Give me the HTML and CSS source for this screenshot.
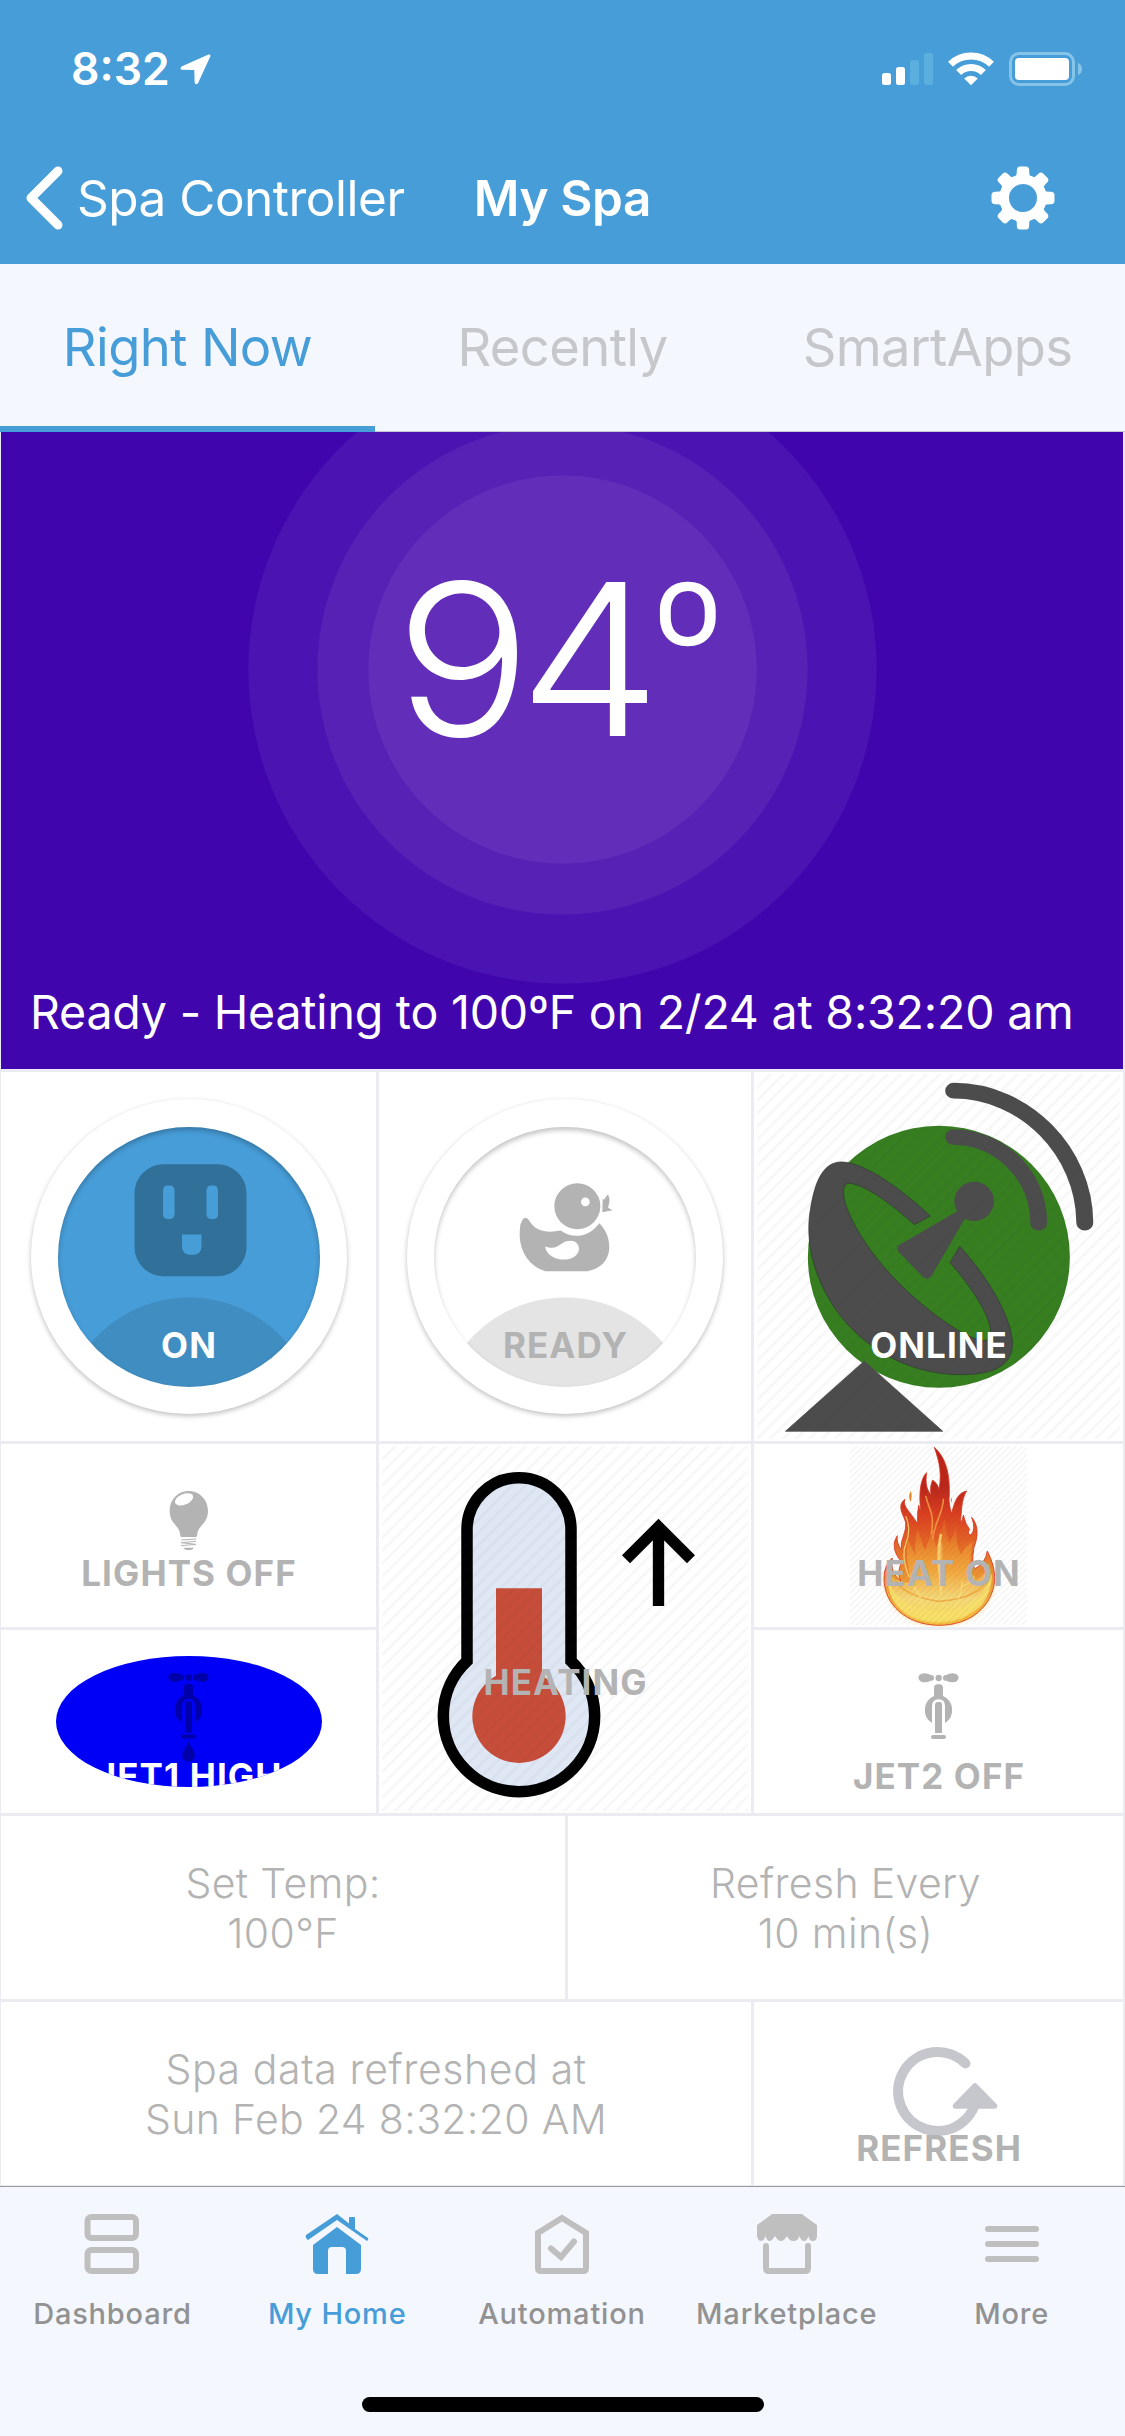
FILE: index.html
```html
<!DOCTYPE html>
<html lang="en">
<head>
<meta charset="utf-8">
<title>My Spa</title>
<link rel="stylesheet" href="styles.css">
</head>
<body>
<header class="header">
  <div class="status-bar">
    <div class="clock">
      <span class="time">8:32</span>
      <svg width="31" height="31" viewBox="0 0 31 31"><path d="M28.500 .6 1.500 12.500Q-.8 15.300 2 15.700L14.300 16 14.600 28.500Q15.500 31.500 18 29.300L30.400 2.200Q30.600-.2 28.500.6Z" fill="#fff"/></svg>
    </div>
    <div class="indicators">
      <svg width="51" height="34" viewBox="0 0 51 34"><rect y="21" width="9" height="12" rx="2.500" fill="#fff"/><rect x="14" y="15" width="9" height="18" rx="2.500" fill="#fff"/><rect x="28" y="8" width="9" height="25" rx="2.500" fill="#5bafde"/><rect x="42" y="1" width="9" height="32" rx="2.500" fill="#5bafde"/></svg>
      <svg class="wifi" width="46" height="34" viewBox="0 0 46 34"><g fill="none" stroke="#fff" stroke-width="7"><path d="M2.500 12.200A29.500 29.500 0 0 1 43.500 12.200"/><path d="M10.600 20.500A17.600 17.600 0 0 1 35.400 20.500"/></g><path d="M16.200 26.600A9.600 9.600 0 0 1 29.800 26.600L23 33.200Z" fill="#fff"/></svg>
      <svg class="battery" width="74" height="34" viewBox="0 0 74 34"><rect x="1.500" y="1.500" width="63" height="31" rx="8.500" fill="none" stroke="#85c3e8" stroke-width="3"/><rect x="6" y="6" width="54" height="22" rx="4" fill="#fff"/><path d="M69 11Q73 12.500 73 17T69 23Z" fill="#85c3e8"/></svg>
    </div>
  </div>
  <nav class="nav-bar">
    <a class="back"><svg width="37" height="64" viewBox="0 0 37 64"><path d="M32 5 5 32 32 59" fill="none" stroke="#fff" stroke-width="9" stroke-linecap="round" stroke-linejoin="round"/></svg><span>Spa Controller</span></a>
    <h1 class="title">My Spa</h1>
    <svg class="gear" width="64" height="64" viewBox="-32 -32 64 64"><circle r="18.800" fill="none" stroke="#fff" stroke-width="9.600"/><g fill="#fff"><path id="tooth" d="M-7.500-21.500Q-6-23-6.200-28Q-6-31.500-3-31.500H3Q6-31.500 6.200-28Q6-23 7.500-21.500Z"/><use href="#tooth" transform="rotate(45)"/><use href="#tooth" transform="rotate(90)"/><use href="#tooth" transform="rotate(135)"/><use href="#tooth" transform="rotate(180)"/><use href="#tooth" transform="rotate(225)"/><use href="#tooth" transform="rotate(270)"/><use href="#tooth" transform="rotate(315)"/></g></svg>
  </nav>
</header>

<div class="tabs">
  <div class="tab active">Right Now</div>
  <div class="tab">Recently</div>
  <div class="tab">SmartApps</div>
</div>

<main class="tiles">
  <section class="hero">
    <div class="temp"><span class="digits">94</span><span class="degree">º</span></div>
    <div class="caption">Ready - Heating to 100ºF on 2/24 at 8:32:20 am</div>
  </section>

  <section class="tile">
    <div class="dial"><div class="face face-on">
      <svg width="260" height="260" viewBox="58 1126.500 260 260"><rect x="133.500" y="1163.700" width="112" height="112" rx="29" fill="#307099"/><g fill="#479dd8"><rect x="162" y="1185" width="11.500" height="33.500" rx="4.500"/><rect x="205.500" y="1185" width="11.500" height="33.500" rx="4.500"/><path d="M181 1234H200.500V1246Q200.500 1254.500 190.700 1254.500T181 1246Z"/></g></svg>
    </div></div>
    <span class="label white">ON</span>
  </section>

  <section class="tile">
    <div class="dial"><div class="face">
      <svg width="260" height="260" viewBox="-195 -130.500 780 780"><g fill="#b3b3b3"><circle cx="232" cy="107" r="69"/><path d="M72 143Q80 139 88 151C107 184 143 188 182 180C215 204 263 204 298 158C320 180 328 205 328 232C326 272 300 296 262 302H136C95 292 58 248 59 190Q59 152 72 143Z"/><path d="M308 85C314 92 316 78 324 72C331 87 329 97 324 110C328 114 332 116 338 119L307 125Z"/></g><circle cx="256" cy="94" r="13" fill="#fff"/><path d="M135 228C160 237 171 229 187 218C211 203 238 212 237 236C232 280 143 278 135 228Z" fill="#fff"/></svg>
    </div></div>
    <span class="label">READY</span>
  </section>

  <section class="tile">
    <svg width="369" height="369" viewBox="538 21 1024 1107" preserveAspectRatio="none">
      <ellipse cx="1051" cy="575.500" rx="363.500" ry="393" fill="#367e20"/>
      <g fill="#4c4c4c">
        <path d="M844 888 1062 1099H625Z" stroke="#4c4c4c" stroke-width="2" stroke-linejoin="round"/>
        <path d="M784 291C850 295 950 375 1027 453L983 479C920 418 850 362 806 355C780 352 782 395 800 440C830 520 900 620 985 700C1060 770 1125 816 1170 826C1205 832 1198 790 1180 745C1155 690 1120 640 1082 593L1109 544C1190 640 1250 755 1255 828C1258 890 1220 929 1115 929C960 930 820 840 745 700C700 615 680 520 695 430C707 350 730 288 784 291Z" stroke="#2f3a2d" stroke-width="2"/>
        <ellipse cx="1149" cy="409" rx="55" ry="59"/>
        <path d="M1103 438 940 541Q932 548 938 559L1008 637Q1021 648 1030 634L1124 459Z"/>
      </g>
      <g fill="none" stroke="#4c4c4c" stroke-linecap="round" stroke-width="47"><path d="M1092 77C1290 77 1455 260 1456 473"/><path d="M1092 216C1220 218 1328 330 1328 473"/></g>
    </svg>
    <div class="hatch"></div>
    <span class="label white">ONLINE</span>
  </section>

  <section class="tile small">
    <svg width="375" height="183" viewBox="3 27 1125 549"><path d="M566 168C534 168 509 194 509 228C509 268 540 270 541 303Q541 306 545 306H587Q591 306 591 303C592 270 624 268 624 228C624 194 598 168 566 168Z" fill="#b3b3b3"/><ellipse cx="552" cy="193" rx="29" ry="16" transform="rotate(-23 552 193)" fill="#fff"/><g fill="none" stroke="#b3b3b3" stroke-width="3"><path d="M544 315 588 312M543 323 588 319M588 328 543 323M543 332 588 328"/></g><path d="M550 338H582Q578 345 566 345T550 338Z" fill="#b3b3b3"/></svg>
    <span class="label">LIGHTS OFF</span>
  </section>

  <section class="tile tall">
    <svg width="372" height="369" viewBox="12 27 1116 1107"><path d="M276 678V284A156 156 0 0 1 588 284V678A227 227 0 1 1 276 678Z" fill="#dfe7f5" stroke="#000" stroke-width="34.500"/><path d="M363 460H501V722A140 140 0 1 1 363 722Z" fill="#c64d39"/><path d="M850.500 513V280M753 373 850.500 275.500 948 373" fill="none" stroke="#000" stroke-width="34"/></svg>
    <div class="hatch"></div>
    <span class="label">HEATING</span>
  </section>

  <section class="tile small">
    <div class="flame">
      <svg width="183" height="183" viewBox="-69 12 549 549">
        <defs>
          <linearGradient id="fire" x1="0" y1="22" x2="0" y2="557" gradientUnits="userSpaceOnUse"><stop offset="0" stop-color="#c02218"/><stop offset=".22" stop-color="#ba261b"/><stop offset=".38" stop-color="#db4020"/><stop offset=".6" stop-color="#e77428"/><stop offset=".78" stop-color="#eea13a"/><stop offset="1" stop-color="#f4bd3d"/></linearGradient>
          <linearGradient id="core" x1="0" y1="270" x2="0" y2="545" gradientUnits="userSpaceOnUse"><stop offset="0" stop-color="#ee8f2c" stop-opacity=".3"/><stop offset=".45" stop-color="#f2a73e"/><stop offset=".75" stop-color="#f5d878"/><stop offset="1" stop-color="#f8df55"/></linearGradient>
          <filter id="glow" x="-20%" y="-20%" width="140%" height="140%"><feGaussianBlur stdDeviation="6"/></filter>
        </defs>
        <path d="M42 400C40 500 115 557 207 557S376 500 376 400Z" fill="#ffd98c" filter="url(#glow)"/>
        <path d="M207 556C110 555 42 495 42 415Q42 375 67 354C61 385 73 410 92 422Q80 395 95 366C72 340 65 312 82 287C79 305 88 322 94 328C91 295 110 278 107 248C102 226 78 198 105 178C96 199 123 217 143 252Q141 218 146 196Q149 210 153 216C147 180 147 118 170 98C165 130 170 148 183 165Q179 138 188 120Q204 132 207 147C216 100 208 65 193 22C235 60 241 120 237 180Q240 210 245 220C255 178 265 159 290 153C272 180 276 220 270 252Q280 238 280 225Q287 255 299 268Q290 282 302 285Q319 268 305 232C328 258 323 294 312 322C308 350 305 374 315 386Q346 370 352 333C368 365 375 392 374 420C368 500 300 556 207 556Z" fill="url(#fire)" stroke="#d9361f" stroke-width="2.500"/>
        <path d="M120 430C122 390 103 350 114 300Q130 330 137 350Q132 300 143 265Q157 315 165 330Q183 290 187 255Q192 310 199 320Q210 280 224 238Q230 290 239 310Q253 280 259 255Q256 315 274 345Q285 315 308 306C302 350 292 390 318 420Q350 402 356 365Q380 435 335 495C270 555 150 560 85 500Q45 455 55 400Q75 425 120 430Z" fill="url(#core)"/>
        <path d="M55 410C62 470 130 515 210 515S345 470 366 400C368 470 315 548 207 548S50 480 55 410Z" fill="#f9e06a" opacity=".8"/>
        <path d="M67 400Q80 440 113 455Q145 475 205 484Q275 480 308 460Q345 445 359 390" fill="none" stroke="#ed9c32" stroke-width="5" opacity=".7"/>
        <g fill="none" stroke="#fbdf7a" stroke-linecap="round" opacity=".8"><path d="M168 170C174 205 195 215 184 280M220 178C219 220 196 240 188 295" stroke="#f6a345" stroke-width="5"/><path d="M212 285Q203 340 209 395T211 460" stroke-width="8"/><path d="M210 315V390" stroke-width="15" opacity=".45"/><path d="M108 230Q124 270 108 310T117 410M128 435Q148 460 164 505M276 425Q276 465 252 505M312 410Q302 430 276 440" stroke-width="4"/></g>
        <path d="M122 153C116 165 117 178 122 185C126 174 126 162 122 153ZM244 172Q240 182 245 190Q248 181 244 172Z" fill="#e38523"/>
      </svg>
      <div class="hatch fine"></div>
    </div>
    <span class="label">HEAT ON</span>
  </section>

  <section class="tile small">
    <div class="oval">
      <svg width="266" height="131" viewBox="168 664.500 798 393"><g id="faucet"><path d="M505 728Q507 716 522 715Q536 716 542 720Q552 719 552 729T542 737Q534 742 522 742Q507 740 505 728ZM626 728Q624 716 609 715Q595 716 589 720Q579 719 579 729T589 737Q597 742 609 742Q624 740 626 728Z"/><circle cx="566" cy="729" r="9.500"/><path d="M552 783V758Q553 749 562 748H570Q578 749 579 758V783A46 46 0 0 1 585 864V812Q584 793 566 793T546 812V864A46 46 0 0 1 552 783Z"/><path d="M555 894V808Q556 801 562 801H570Q576 801 576 808V894Z"/><rect x="543" y="900" width="45" height="12" rx="6"/></g><path d="M566 921C571 937 585 948 585 962A19 19 0 0 1 547 962C547 948 561 937 566 921Z"/></svg>
      <span class="label white">JET1 HIGH</span>
    </div>
  </section>

  <section class="tile small low">
    <svg width="369" height="183" viewBox="12 585 1107 549"><use href="#faucet" fill="#b3b3b3"/></svg>
    <span class="label">JET2 OFF</span>
  </section>

  <section class="tile info half"><p>Set Temp:</p><p>100°F</p></section>
  <section class="tile info half"><p>Refresh Every</p><p>10 min(s)</p></section>
  <section class="tile info wide"><p class="loose">Spa data refreshed at</p><p>Sun Feb 24 8:32:20 AM</p></section>

  <section class="tile small low">
    <svg width="369" height="183" viewBox="0 0 369 183"><path d="M211.500 61.500A39.500 39.500 0 1 0 223 92" fill="none" stroke="#c6c7cc" stroke-width="10" stroke-linecap="round"/><path d="M221 84 240.500 104H201.500Z" fill="#c6c7cc" stroke="#c6c7cc" stroke-width="5.500" stroke-linejoin="round"/></svg>
    <span class="label">REFRESH</span>
  </section>
</main>

<footer class="tab-bar">
  <div class="items">
    <a class="item"><svg width="60" height="60" viewBox="0 0 60 60" fill="none" stroke="#bfbfbf" stroke-width="6"><rect x="5.500" y="3" width="48.500" height="21" rx="4"/><rect x="5.500" y="36" width="48.500" height="21" rx="4"/></svg><span>Dashboard</span></a>
    <a class="item current"><svg width="64" height="60" viewBox="0 0 64 60" fill="#479dd8"><path d="M32 0 44 9.500V4Q44 3 45 3H49Q50 3 50 4V15L63 24Q64 26 62 27L32 6 3 26Q0 24 1 21Z"/><path d="M32 13 56 31V55Q56 60 51 60H41V37Q41 33 37 33H27Q23 33 23 37V60H13Q8 60 8 55V31Z"/></svg><span>My Home</span></a>
    <a class="item"><svg width="56" height="60" viewBox="0 0 56 60" fill="none" stroke="#bfbfbf" stroke-width="6" stroke-linecap="round"><path d="M28 4 52 19V54Q52 57 49 57H7Q4 57 4 54V19Z"/><path d="M17 34.500 27 43 40 27.500"/></svg><span>Automation</span></a>
    <a class="item"><svg width="60" height="60" viewBox="0 0 60 60"><path d="M15 0H45Q50 4 60 11V22Q60 27 56 27T51.500 22Q50 27 47 27T42.500 22Q41 27 36.500 27T30 22Q27 27 24 27T18 22Q15 27 12.500 27T8.500 22Q7 27 4 27T0 22V11Q10 4 15 0Z" fill="#bfbfbf"/><path d="M9 32V54Q9 57 12 57H48Q51 57 51 54V32" fill="none" stroke="#bfbfbf" stroke-width="6" stroke-linecap="round"/></svg><span>Marketplace</span></a>
    <a class="item"><svg width="54" height="60" viewBox="0 0 54 60" stroke="#bfbfbf" stroke-width="6" stroke-linecap="round"><path d="M3 15H51M3 30H51M3 45H51"/></svg><span>More</span></a>
  </div>
  <div class="home-indicator"></div>
</footer>
</body>
</html>
```
FILE: styles.css
```css
* { box-sizing: border-box; }

body {
  margin: 0;
  width: 1125px;
  height: 2436px;
  overflow: hidden;
  background: #f4f7fe;
  font-family: Inter, "Liberation Sans", sans-serif;
  white-space: nowrap;
}

svg { display: block; flex: none; }
p { margin: 0; }

/* Header */
.header { height: 264px; background: #479dd8; color: #fff; }

.status-bar {
  height: 132px;
  padding: 6px 42px 0 71px;
  display: flex;
  align-items: center;
  justify-content: space-between;
}
.clock { display: flex; align-items: center; gap: 10px; }
.time { font-size: 44.500px; font-weight: 600; letter-spacing: 0; }
.indicators { display: flex; align-items: center; }
.wifi { margin-left: 15px; }
.battery { margin-left: 15px; }

.nav-bar {
  height: 132px;
  display: grid;
  grid-template-columns: 1fr auto 1fr;
  align-items: center;
}
.back {
  display: flex;
  align-items: center;
  gap: 14px;
  padding-left: 26px;
  font-size: 49.500px;
  letter-spacing: -0.5px;
}
.title { margin: 0; font-size: 49.500px; font-weight: 600; letter-spacing: -0.4px; }
.gear { justify-self: end; margin-right: 70px; }

/* Section tabs */
.tabs {
  display: grid;
  grid-template-columns: repeat(3, 1fr);
  height: 168px;
  box-shadow: inset 0 -1px #c8cacf;
}
.tab {
  line-height: 166px;
  text-align: center;
  font-size: 52.500px;
  letter-spacing: -0.6px;
  color: #c6c7cb;
}
.tab.active { color: #479dd8; box-shadow: inset 0 -6px #479dd8; }

/* Device tiles */
.tiles {
  display: grid;
  grid-template-columns: 375px 186px 183px 369px;
  grid-template-rows: 637px 369px 183px 183px 183px 183px;
  gap: 3px;
  padding: 0 2px 1px 1px;
  background: #ebecf1;
}

.hero {
  grid-column: 1 / -1;
  overflow: hidden;
  color: #fff;
  background: radial-gradient(circle at 561.500px 237.500px,
    #622eb9 193.500px, #5721b6 194.500px,
    #5721b6 244.500px, #4b13b1 245.500px,
    #4b13b1 313.500px, #4105ad 314.500px);
}
.temp {
  height: 200px;
  margin-top: 126.500px;
  padding-left: 394px;
  line-height: 200px;
  font-size: 212px;
  font-weight: 300;
}
.digits {
  display: inline-block;
  letter-spacing: -12px;
  transform: scaleX(1.07);
  transform-origin: left;
}
.degree {
  margin-left: 19.500px;
  line-height: 0;
  font-size: 170px;
  font-weight: 350;
  vertical-align: 32px;
}
.caption {
  margin-top: 223.500px;
  padding-left: 29px;
  line-height: 60px;
  font-size: 46.500px;
  letter-spacing: -0.2px;
}

.tile {
  display: grid;
  place-items: center;
  background: #fff;
  overflow: hidden;
  --label-bottom: 76.500px;
}
.tile > * { grid-area: 1 / 1; }
.tile:nth-child(3), .tall { grid-column: span 2; }
.tall { grid-row: span 2; --label-bottom: 111.500px; }
.small { --label-bottom: 34.500px; }
.low { --label-bottom: 17.500px; }

.label {
  align-self: end;
  margin-bottom: var(--label-bottom);
  line-height: 40px;
  font-size: 35px;
  font-weight: 700;
  letter-spacing: 1.1px;
  text-indent: 1.1px;
  color: #b3b3b3;
}
.white { color: #fff; }

.dial {
  width: 316px;
  height: 315px;
  display: grid;
  place-items: center;
  border-radius: 50%;
  box-shadow: 0 2px 5px rgba(0, 0, 0, .26);
}
.face {
  width: 262px;
  height: 260px;
  display: grid;
  place-items: center;
  overflow: hidden;
  border-radius: 50%;
  background: radial-gradient(circle at 131px 299px, #e4e4e4 128px, transparent 129px);
  box-shadow: inset 0 3px 5px rgba(0, 0, 0, .24);
}
.face-on {
  background: radial-gradient(circle at 131px 299px, #408dc2 128px, #479dd8 129px);
}

.hatch {
  width: calc(100% - 6px);
  height: calc(100% - 4px);
  background: repeating-linear-gradient(135deg, rgba(60, 60, 60, .045) 0, rgba(60, 60, 60, .045) 1px, transparent 2.500px, transparent 7.700px, rgba(60, 60, 60, .045) 9.200px);
}
.hatch.fine {
  background: repeating-linear-gradient(135deg, rgba(60, 60, 60, .05) 0 1px, transparent 1.500px 4px, rgba(60, 60, 60, .05) 4.500px);
}

.flame { display: grid; place-items: center; width: 183px; height: 183px; }
.flame > * { grid-area: 1 / 1; }

.oval {
  width: 266px;
  height: 131px;
  display: grid;
  justify-items: center;
  overflow: hidden;
  border-radius: 50%;
  background: #0000f6;
  fill: #0000ab;
}
.oval > * { grid-area: 1 / 1; }
.oval .label { align-self: start; margin: 100px 0 0; }

.info {
  align-content: center;
  padding-top: 1px;
  line-height: 50px;
  font-size: 41px;
  font-weight: 300;
  letter-spacing: 0.35px;
  color: #b3b3b3;
}
.info > p { grid-area: auto; }
.info .loose { letter-spacing: 0.6px; }
.half { grid-column: span 2; }
.wide { grid-column: span 3; }

/* Bottom tab bar */
.tab-bar {
  height: 250px;
  border-top: 1px solid #96999d;
  background: #f4f7fe;
}
.items {
  display: grid;
  grid-template-columns: repeat(5, 1fr);
  height: 210px;
  padding: 27px 1px 0 0;
}
.item {
  display: flex;
  flex-direction: column;
  align-items: center;
  gap: 19.500px;
  line-height: 40px;
  font-size: 29px;
  font-weight: 500;
  letter-spacing: 0.8px;
  color: #929292;
}
.item.current { color: #479dd8; }
.home-indicator {
  width: 402px;
  height: 15px;
  margin: 0 auto;
  border-radius: 8px;
  background: #000;
}
```
